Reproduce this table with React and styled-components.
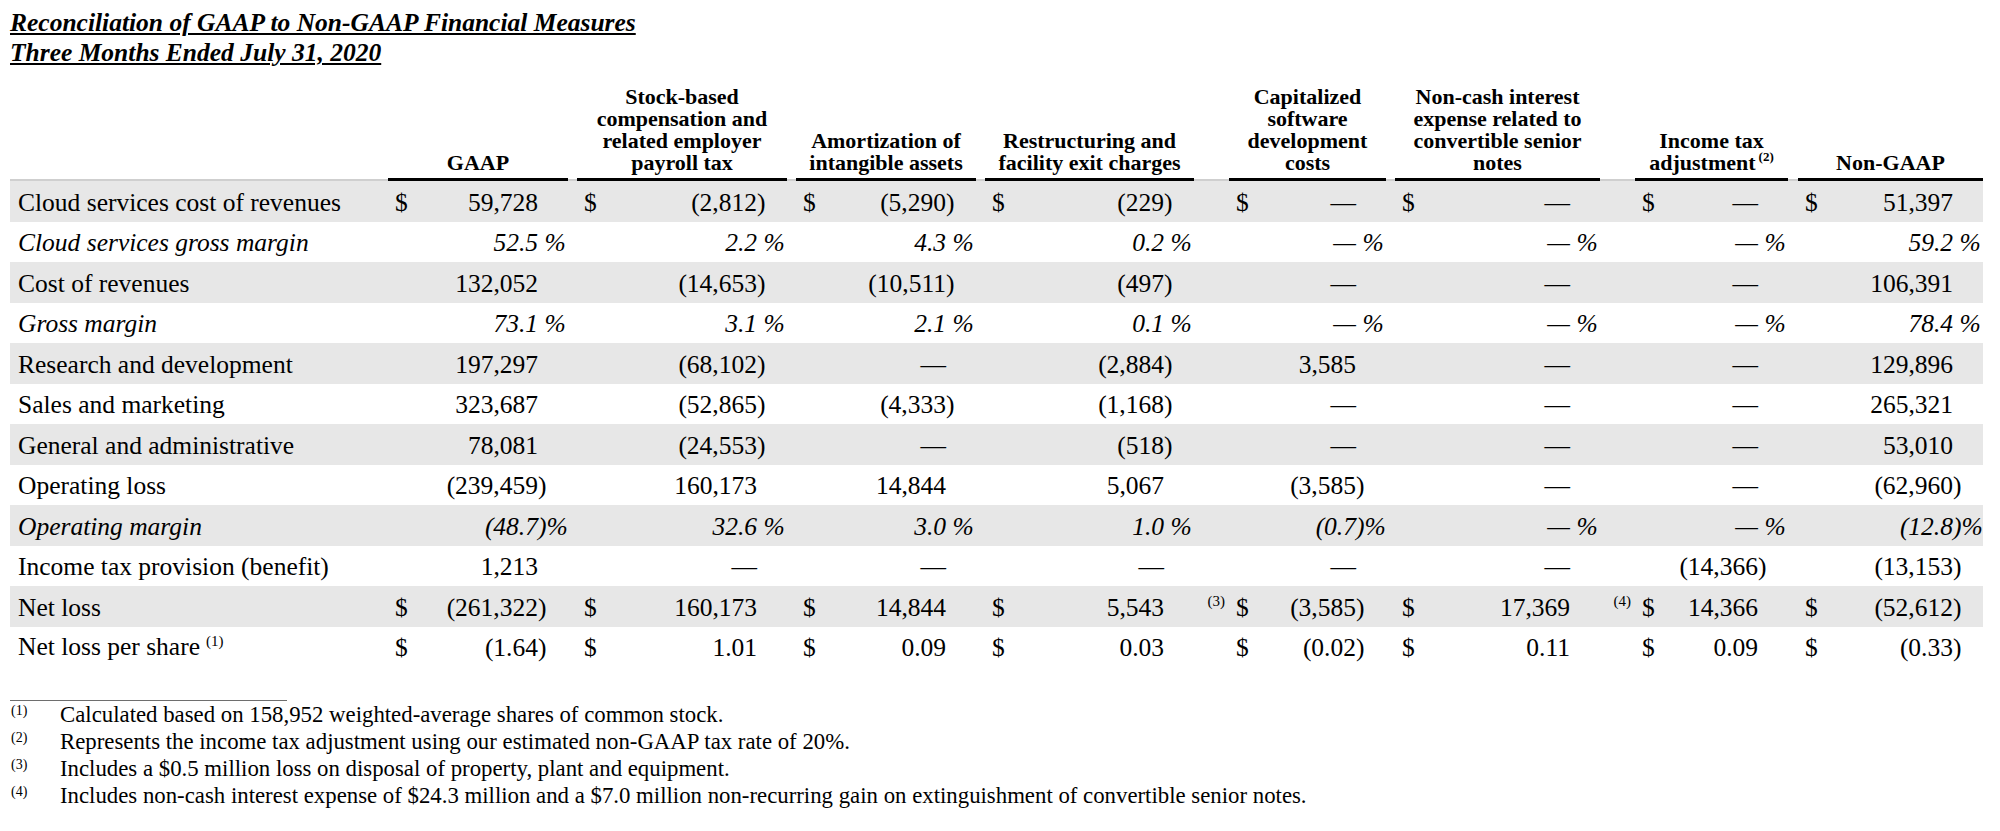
import React from "react";
import styled, { createGlobalStyle } from "styled-components";

const GlobalStyle = createGlobalStyle`
  html, body {
    margin: 0;
    padding: 0;
    background: #ffffff;
  }
  body {
    font-family: "Liberation Serif", "Times New Roman", serif;
    color: #000000;
  }
`;

const NUM_WIDTHS = [120, 150, 120, 149, 97, 145, 93, 125];
const GAP_WIDTHS = [9, 9, 9, 35, 9, 35, 10];
const DOLLAR_W = 30;
const SUFFIX_W = 30;

const COLS = [
  "378px",
  ...NUM_WIDTHS.flatMap((w, i) => {
    const cols = [`${DOLLAR_W}px`, `${w}px`, `${SUFFIX_W}px`];
    if (i < GAP_WIDTHS.length) cols.push(`${GAP_WIDTHS[i]}px`);
    return cols;
  }),
].join(" ");

const Page = styled.div`
  padding: 8px 0 0 10px;
  width: 1973px;
`;

const TitleBlock = styled.div`
  font-size: 25.5px;
  line-height: 30px;
  font-weight: 700;
  font-style: italic;
`;

const TitleLine = styled.div`
  text-decoration: underline;
  text-decoration-thickness: 2px;
  text-underline-offset: 2px;
  white-space: nowrap;
`;

const Table = styled.div`
  margin-top: 18px;
  display: flex;
  flex-direction: column;
`;

const HeaderRow = styled.div`
  display: grid;
  grid-template-columns: ${COLS};
  align-items: stretch;
`;

const HeadBlank = styled.div`
  box-shadow: inset 0 -2px 0 #cfcfcf;
`;

const HeadCell = styled.div`
  grid-column: span 3;
  display: flex;
  flex-direction: column;
  justify-content: flex-end;
  align-items: center;
  text-align: center;
  font-weight: 700;
  font-size: 22px;
  line-height: 22px;
  padding-bottom: 7px;
  white-space: nowrap;
  box-shadow: inset 0 -3px 0 #000000;
`;

const HeadSup = styled.sup`
  font-size: 13px;
  line-height: 0;
  vertical-align: 9px;
  margin-left: 3px;
`;

const Row = styled.div`
  display: grid;
  grid-template-columns: ${COLS};
  height: 40.5px;
  align-items: center;
  font-size: 25.5px;
  background: ${(p) => (p.$shaded ? "#e7e7e7" : "#ffffff")};
  font-style: ${(p) => (p.$italic ? "italic" : "normal")};
`;

const Cell = styled.div`
  white-space: nowrap;
  padding-top: 3px;
  line-height: 30px;
`;

const Label = styled(Cell)`
  padding-left: 8px;
`;

const Dollar = styled(Cell)`
  padding-left: 7px;
  font-style: normal;
`;

const Num = styled(Cell)`
  text-align: right;
`;

const Suffix = styled(Cell)`
  text-align: left;
`;

const Gap = styled(Cell)`
  text-align: right;
  padding-right: 4px;
`;

const RowSup = styled.span`
  font-size: 15px;
  position: relative;
  top: -8px;
`;

const LabelSup = styled.span`
  font-size: 15px;
  position: relative;
  top: -9px;
  margin-left: 6px;
`;

const FootRule = styled.div`
  margin-top: 33px;
  width: 277px;
  height: 1px;
  background: #6e6e6e;
`;

const FootList = styled.div`
  display: flex;
  flex-direction: column;
`;

const FootItem = styled.div`
  display: grid;
  grid-template-columns: 50px 1fr;
  font-size: 22.8px;
  line-height: 27px;
`;

const FootMark = styled.span`
  font-size: 14px;
  line-height: 14px;
  padding-top: 3px;
  padding-left: 1px;
`;

const FootText = styled.span`
  white-space: nowrap;
`;

const HEADERS = [
  ["GAAP"],
  ["Stock-based", "compensation and", "related employer", "payroll tax"],
  ["Amortization of", "intangible assets"],
  ["Restructuring and", "facility exit charges"],
  ["Capitalized", "software", "development", "costs"],
  ["Non-cash interest", "expense related to", "convertible senior", "notes"],
  ["Income tax", "adjustment"],
  ["Non-GAAP"],
];

const ROWS = [
  {
    label: "Cloud services cost of revenues",
    dollar: true,
    vals: ["59,728", "(2,812)", "(5,290)", "(229)", "—", "—", "—", "51,397"],
  },
  {
    label: "Cloud services gross margin",
    italic: true,
    vals: ["52.5 %", "2.2 %", "4.3 %", "0.2 %", "— %", "— %", "— %", "59.2 %"],
  },
  {
    label: "Cost of revenues",
    vals: ["132,052", "(14,653)", "(10,511)", "(497)", "—", "—", "—", "106,391"],
  },
  {
    label: "Gross margin",
    italic: true,
    vals: ["73.1 %", "3.1 %", "2.1 %", "0.1 %", "— %", "— %", "— %", "78.4 %"],
  },
  {
    label: "Research and development",
    vals: ["197,297", "(68,102)", "—", "(2,884)", "3,585", "—", "—", "129,896"],
  },
  {
    label: "Sales and marketing",
    vals: ["323,687", "(52,865)", "(4,333)", "(1,168)", "—", "—", "—", "265,321"],
  },
  {
    label: "General and administrative",
    vals: ["78,081", "(24,553)", "—", "(518)", "—", "—", "—", "53,010"],
  },
  {
    label: "Operating loss",
    vals: ["(239,459)", "160,173", "14,844", "5,067", "(3,585)", "—", "—", "(62,960)"],
  },
  {
    label: "Operating margin",
    italic: true,
    vals: ["(48.7)%", "32.6 %", "3.0 %", "1.0 %", "(0.7)%", "— %", "— %", "(12.8)%"],
  },
  {
    label: "Income tax provision (benefit)",
    vals: ["1,213", "—", "—", "—", "—", "—", "(14,366)", "(13,153)"],
  },
  {
    label: "Net loss",
    dollar: true,
    vals: ["(261,322)", "160,173", "14,844", "5,543", "(3,585)", "17,369", "14,366", "(52,612)"],
    notes: { 3: "(3)", 5: "(4)" },
  },
  {
    label: "Net loss per share",
    labelNote: "(1)",
    dollar: true,
    vals: ["(1.64)", "1.01", "0.09", "0.03", "(0.02)", "0.11", "0.09", "(0.33)"],
  },
];

const FOOTNOTES = [
  ["(1)", "Calculated based on 158,952 weighted-average shares of common stock."],
  ["(2)", "Represents the income tax adjustment using our estimated non-GAAP tax rate of 20%."],
  ["(3)", "Includes a $0.5 million loss on disposal of property, plant and equipment."],
  [
    "(4)",
    "Includes non-cash interest expense of $24.3 million and a $7.0 million non-recurring gain on extinguishment of convertible senior notes.",
  ],
];

function splitValue(str) {
  if (str.endsWith(")%")) return [str.slice(0, -2), ")%"];
  if (str.endsWith(" %")) return [str.slice(0, -2), "\u00a0%"];
  if (str.endsWith(")")) return [str.slice(0, -1), ")"];
  return [str, ""];
}

function Header() {
  const cells = [<HeadBlank key="label" />];
  HEADERS.forEach((lines, i) => {
    cells.push(
      <HeadCell key={`h${i}`}>
        {lines.map((line, j) => (
          <div key={j}>
            {line}
            {i === 6 && j === lines.length - 1 ? <HeadSup>(2)</HeadSup> : null}
          </div>
        ))}
      </HeadCell>
    );
    if (i < GAP_WIDTHS.length) cells.push(<HeadBlank key={`g${i}`} />);
  });
  return <HeaderRow>{cells}</HeaderRow>;
}

function DataRow({ row, index }) {
  const cells = [
    <Label key="label">
      {row.label}
      {row.labelNote ? <LabelSup>{row.labelNote}</LabelSup> : null}
    </Label>,
  ];
  row.vals.forEach((val, i) => {
    const [num, suf] = splitValue(val);
    cells.push(<Dollar key={`d${i}`}>{row.dollar ? "$" : ""}</Dollar>);
    cells.push(<Num key={`n${i}`}>{num}</Num>);
    cells.push(<Suffix key={`s${i}`}>{suf}</Suffix>);
    if (i < GAP_WIDTHS.length) {
      const note = row.notes && row.notes[i];
      cells.push(<Gap key={`g${i}`}>{note ? <RowSup>{note}</RowSup> : null}</Gap>);
    }
  });
  return (
    <Row $shaded={index % 2 === 0} $italic={row.italic}>
      {cells}
    </Row>
  );
}

export default function App() {
  return (
    <>
      <GlobalStyle />
      <Page>
        <TitleBlock>
          <TitleLine>Reconciliation of GAAP to Non-GAAP Financial Measures</TitleLine>
          <TitleLine>Three Months Ended July 31, 2020</TitleLine>
        </TitleBlock>
        <Table>
          <Header />
          {ROWS.map((row, i) => (
            <DataRow key={row.label} row={row} index={i} />
          ))}
        </Table>
        <FootRule />
        <FootList>
          {FOOTNOTES.map(([mark, text]) => (
            <FootItem key={mark}>
              <FootMark>{mark}</FootMark>
              <FootText>{text}</FootText>
            </FootItem>
          ))}
        </FootList>
      </Page>
    </>
  );
}
